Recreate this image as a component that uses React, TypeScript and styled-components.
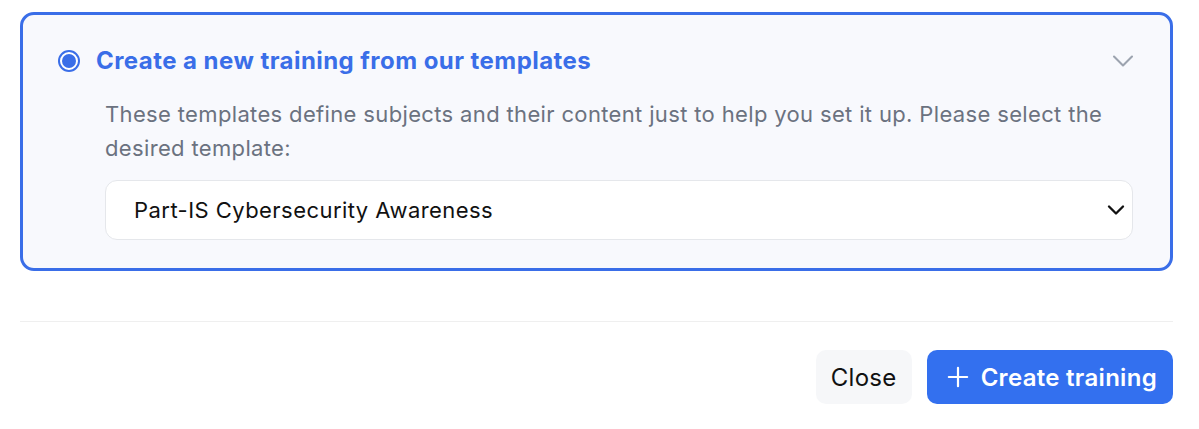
import React from 'react'
import styled, { createGlobalStyle } from 'styled-components'

const GlobalStyle = createGlobalStyle`
  body {
    margin: 0;
    background: #ffffff;
    font-family: Inter, "Open Sans", sans-serif;
  }
`

const Shell = styled.div`
  width: 1153px;
  margin-left: 20px;
  padding-top: 12px;
`

const OptionCard = styled.section`
  border: 3px solid #3a6ee8;
  border-radius: 14px;
  background: #f8f9fd;
  padding: 31px 29px 28px 35px;
`

const Header = styled.div`
  display: flex;
  align-items: center;
  gap: 16px;
  height: 30px;
`

const Radio = styled.span`
  width: 22px;
  height: 22px;
  border-radius: 50%;
  border: 2px solid #3a6ee8;
  background: #ffffff;
  box-sizing: border-box;
  display: flex;
  align-items: center;
  justify-content: center;
  flex-shrink: 0;
  &::after {
    content: '';
    width: 14px;
    height: 14px;
    border-radius: 50%;
    background: #3a6ee8;
  }
`

const Title = styled.h2`
  margin: 0;
  flex: 1;
  font-size: 24px;
  line-height: 30px;
  letter-spacing: 0.45px;
  font-weight: 700;
  color: #3a6ee8;
`

const Body = styled.div`
  padding: 0 8px 0 47px;
  margin-top: 21px;
`

const Lead = styled.p`
  margin: 0;
  font-size: 22px;
  line-height: 34px;
  letter-spacing: 0.35px;
  color: #6b7280;
`

const Select = styled.div`
  margin-top: 15px;
  height: 60px;
  border: 1px solid #e5e7eb;
  border-radius: 12px;
  background: #ffffff;
  box-sizing: border-box;
  display: flex;
  align-items: center;
  padding: 0 2px 0 28px;
  font-size: 22px;
  letter-spacing: 0.45px;
  color: #111111;
`

const SelectText = styled.span`
  flex: 1;
`

const Divider = styled.hr`
  margin: 50px 0 0;
  border: 0;
  border-top: 1px solid #efefef;
`

const Footer = styled.div`
  display: flex;
  justify-content: flex-end;
  gap: 15px;
  margin-top: 28px;
`

const Button = styled.button<{ $primary?: boolean }>`
  height: 54px;
  border: 0;
  border-radius: 10px;
  padding: ${({ $primary }) => ($primary ? '0 16px 0 20px' : '0 15px')};
  display: flex;
  align-items: center;
  gap: 12px;
  font-family: inherit;
  font-size: 24px;
  letter-spacing: 0.3px;
  font-weight: ${({ $primary }) => ($primary ? 600 : 400)};
  background: ${({ $primary }) => ($primary ? '#3370ef' : '#f6f7f9')};
  color: ${({ $primary }) => ($primary ? '#ffffff' : '#111111')};
`

const Chevron = ({ color, size, weight }: { color: string; size: number; weight: number }) => (
  <svg width={size} height={size} viewBox="0 0 24 24" fill="none" stroke={color} strokeWidth={weight} strokeLinecap="round" strokeLinejoin="round">
    <path d="M6 9l6 6 6-6" />
  </svg>
)

export default function App() {
  return (
    <Shell>
      <GlobalStyle />
      <OptionCard>
        <Header>
          <Radio />
          <Title>Create a new training from our templates</Title>
          <Chevron color="#9ca3af" size={36} weight={1.4} />
        </Header>
        <Body>
          <Lead>
            These templates define subjects and their content just to help you set it up. Please select the desired
            template:
          </Lead>
          <Select>
            <SelectText>Part-IS Cybersecurity Awareness</SelectText>
            <Chevron color="#111111" size={28} weight={2} />
          </Select>
        </Body>
      </OptionCard>
      <Divider />
      <Footer>
        <Button>Close</Button>
        <Button $primary>
          <svg width="22" height="22" viewBox="0 0 24 24" fill="none" stroke="#fff" strokeWidth="2.4" strokeLinecap="round">
            <path d="M12 2v20M2 12h20" />
          </svg>
          Create training
        </Button>
      </Footer>
    </Shell>
  )
}
